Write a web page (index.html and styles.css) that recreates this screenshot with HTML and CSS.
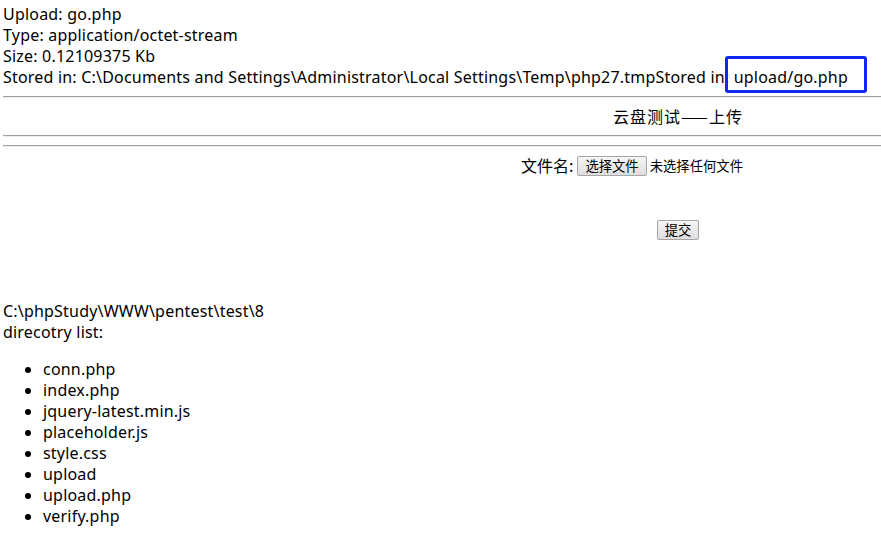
FILE: index.html
```html
<!DOCTYPE html>
<html>
<head>
<meta charset="utf-8">
<link rel="stylesheet" href="styles.css">
</head>
<body>
<div class="info">
  <div>Upload: go.php</div>
  <div>Type: application/octet-stream</div>
  <div>Size: 0.12109375 Kb</div>
  <div>Stored in: C:\Documents and Settings\Administrator\Local Settings\Temp\php27.tmpStored in: upload/go.php</div>
</div>
<hr class="rule">
<div class="panel">
  <div class="title">云盘测试——上传</div>
</div>
<hr class="rule">
<hr class="rule">
<form class="panel form">
  <div class="file-row">
    <label class="label">文件名:</label>
    <button type="button" class="btn">选择文件</button>
    <span class="nofile">未选择任何文件</span>
  </div>
  <div class="submit-row">
    <button type="button" class="btn">提交</button>
  </div>
</form>
<div class="dir">
  <div>C:\phpStudy\WWW\pentest\test\8</div>
  <div>direcotry list:</div>
  <ul class="list">
    <li>conn.php</li>
    <li>index.php</li>
    <li>jquery-latest.min.js</li>
    <li>placeholder.js</li>
    <li>style.css</li>
    <li>upload</li>
    <li>upload.php</li>
    <li>verify.php</li>
  </ul>
</div>
<div class="highlight"></div>
</body>
</html>
```
FILE: styles.css
```css
html, body {
  margin: 0;
  background: #fff;
}
body {
  padding: 4px 0 0 3px;
  font-family: "Noto Sans", "Noto Sans CJK SC", sans-serif;
  font-size: 16px;
  line-height: 21px;
  letter-spacing: 0.2px;
  color: #000;
  position: relative;
}
.info div {
  white-space: nowrap;
}
.rule {
  margin: 8px 0;
  border: 0;
  border-top: 1px solid #a0a0a0;
  border-bottom: 1px solid #eeeeee;
  height: 0;
}
.panel {
  margin-left: 610px;
  width: 130px;
}
.title {
  text-align: center;
  font-family: "Noto Sans CJK SC", sans-serif;
  letter-spacing: 1px;
  white-space: nowrap;
}
.form {
  margin-top: 0;
  margin-bottom: 0;
  padding-top: 0;
}
.file-row {
  display: flex;
  justify-content: flex-end;
  align-items: center;
  gap: 4px;
  white-space: nowrap;
}
.label {
  font-family: "Noto Sans CJK SC", sans-serif;
  font-size: 16px;
  letter-spacing: 0;
}
.btn {
  font-family: "Noto Sans CJK SC", sans-serif;
  font-size: 13.33px;
  line-height: 16px;
  letter-spacing: 0;
  padding: 1px 7px;
  border: 1px solid #a6a6a6;
  border-radius: 2px;
  background: linear-gradient(#f6f6f6, #dedede);
  color: #000;
  white-space: nowrap;
}
.nofile {
  font-family: "Noto Sans CJK SC", sans-serif;
  font-size: 13.33px;
  letter-spacing: 0;
  margin-left: -1px;
}
.submit-row {
  display: flex;
  justify-content: center;
  margin-top: 44px;
}
.dir {
  margin-top: 61px;
}
.list {
  margin: 16px 0;
  padding-left: 40px;
}
.highlight {
  position: absolute;
  left: 725px;
  top: 56px;
  width: 136px;
  height: 31px;
  border: 3px solid #1028f2;
  border-radius: 3px;
}
```
